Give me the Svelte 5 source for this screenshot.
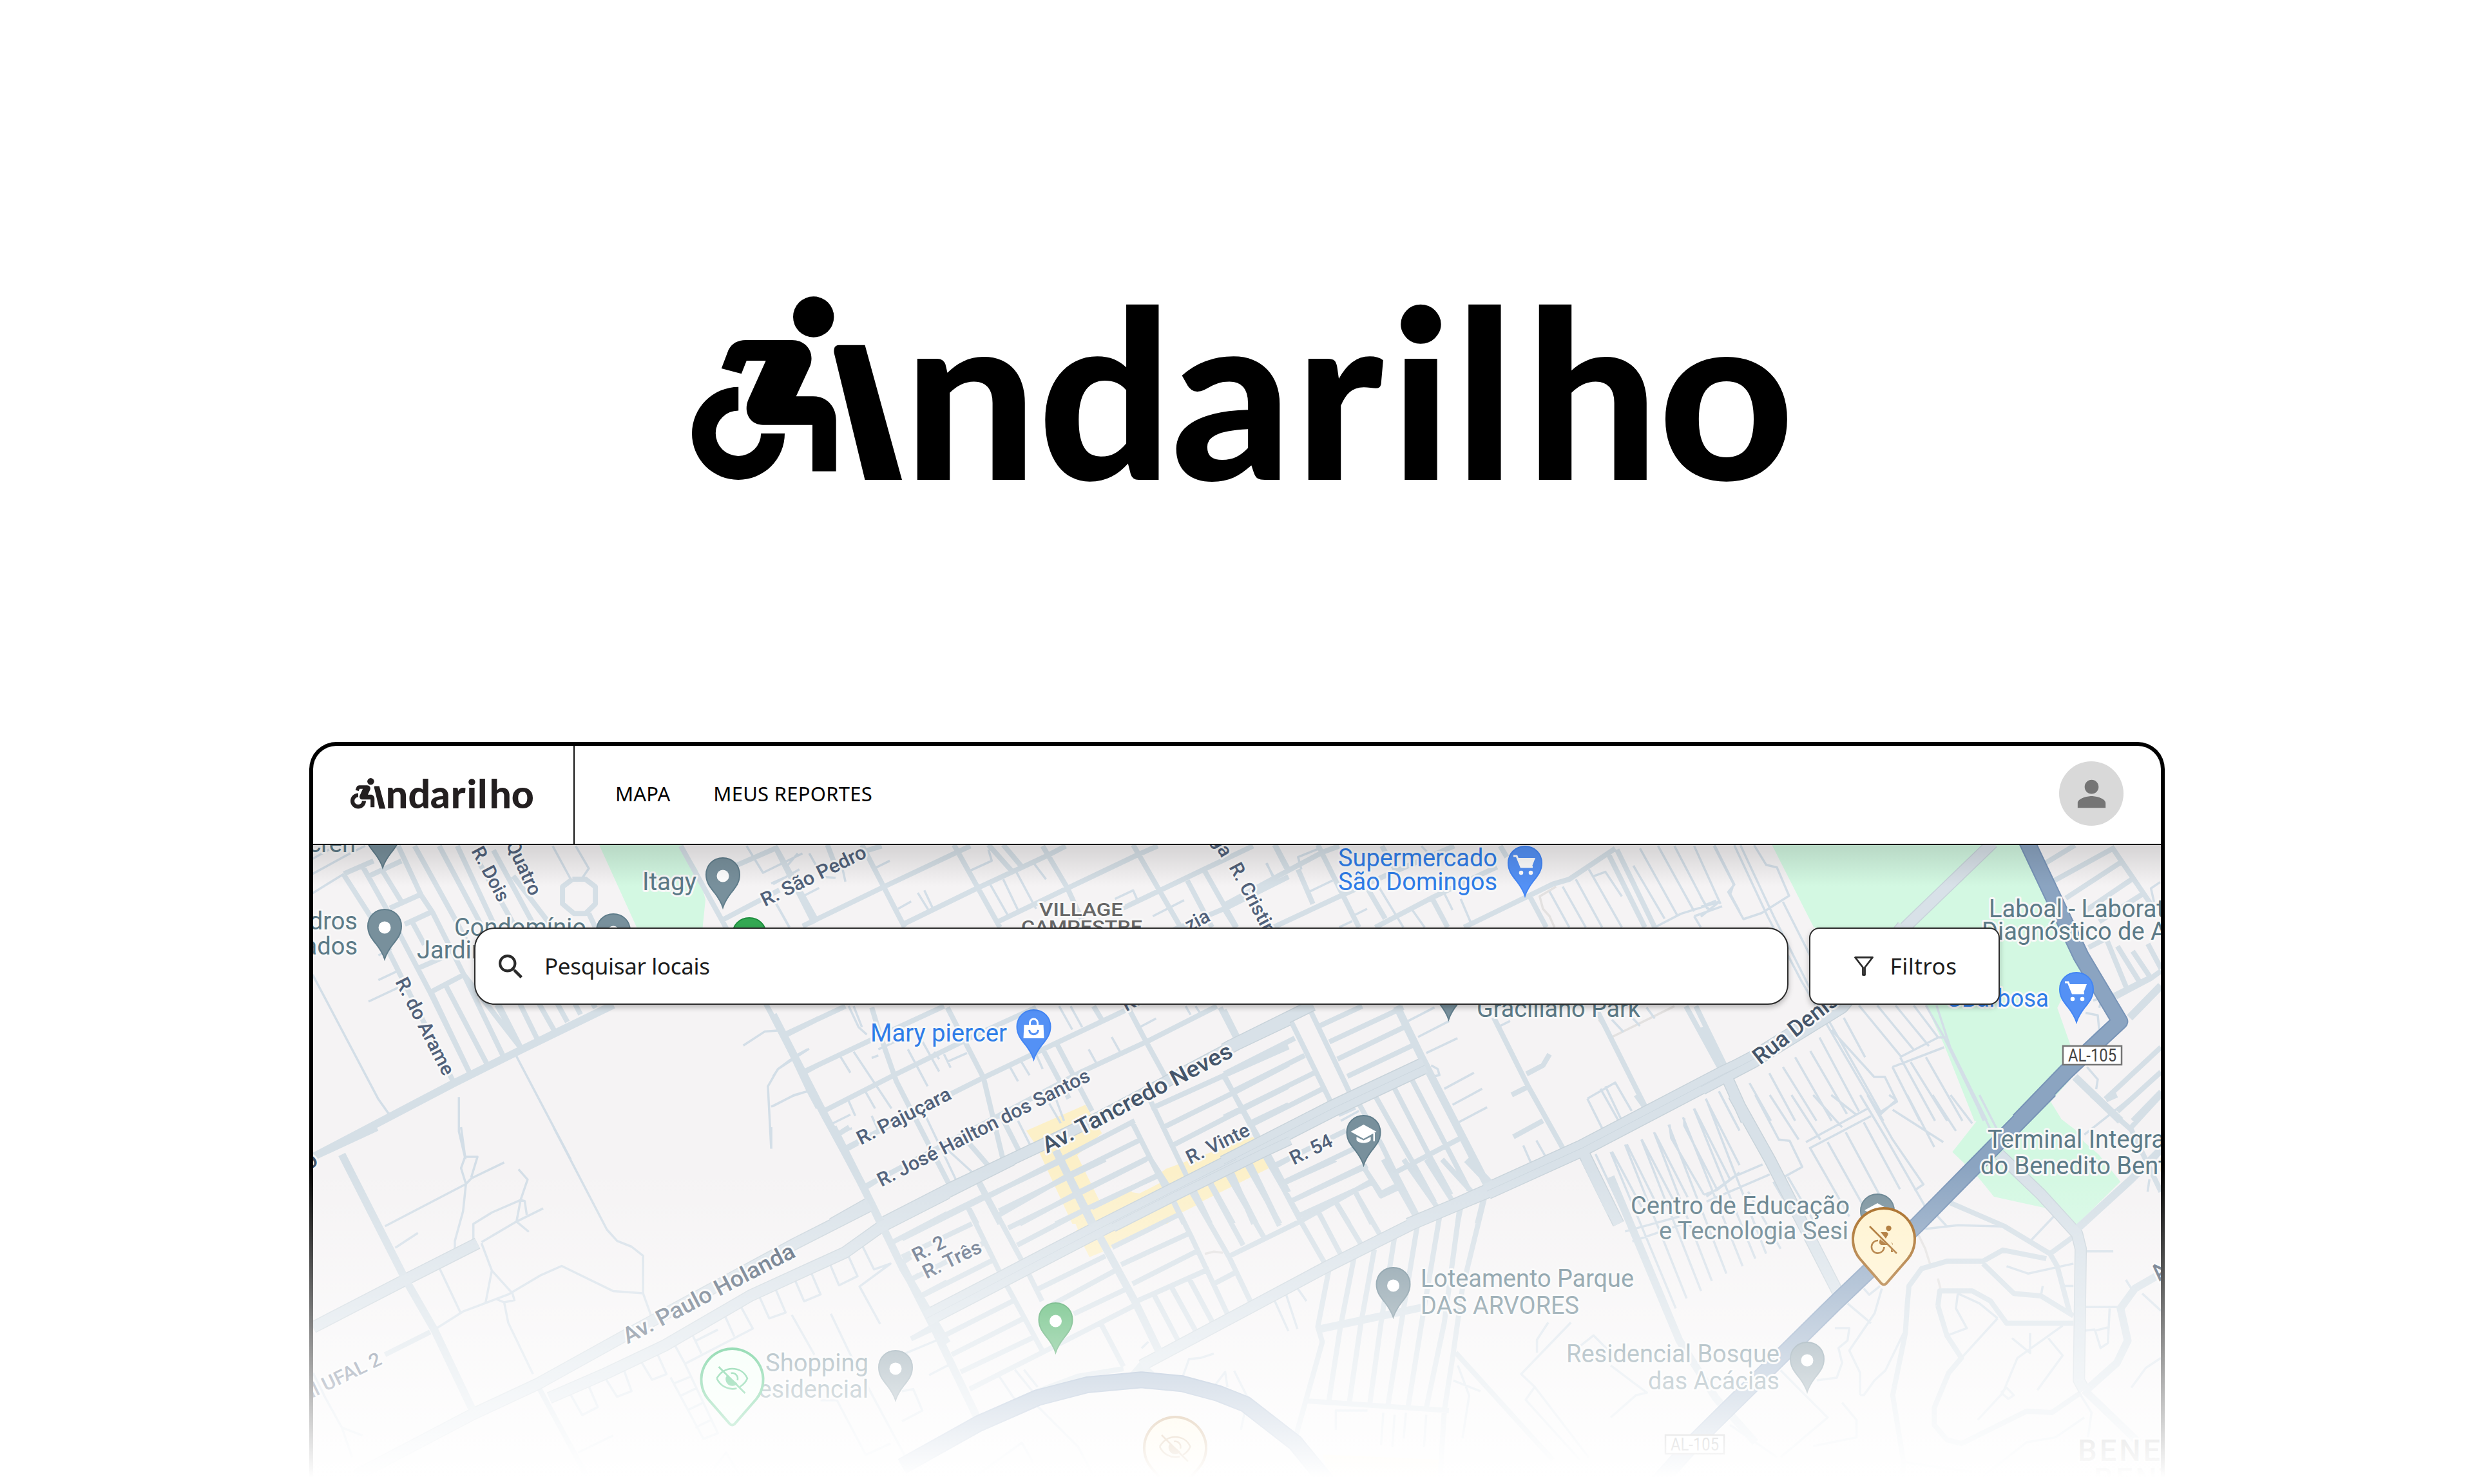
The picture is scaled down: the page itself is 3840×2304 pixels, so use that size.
<script>
  const sheet = (ox, oy, sx, sy) => (text) =>
    text
      .trim()
      .split(/\s*;\s*|\n+/)
      .filter((line) => line.trim())
      .map(
        (line) =>
          'M' +
          line
            .trim()
            .split(/\s+/)
            .map((p) => {
              const [x, y] = p.split(',').map(Number);
              return (ox + x * sx).toFixed(1) + ' ' + (oy + y * sy).toFixed(1);
            })
            .join('L')
      )
      .join('');

  const nw = sheet(470, 1300, 0.5102, 0.3333);
  const north = sheet(1200, 1300, 0.5102, 0.3827);
  const mid = sheet(1900, 1300, 0.5102, 0.3827);
  const ne = sheet(2640, 1140, 0.472, 0.3827);
  const se = sheet(2500, 1700, 0.5612, 0.3852);
  const sw = sheet(470, 1750, 0.6378, 0.3533);
  const south = sheet(1400, 1800, 0.7015, 0.3333);

  const parks =
    nw('900,30 1150,30 1200,150 1225,290 1215,440 1022,440') +
    ne('230,440 1050,440 1265,965 1220,990 1172,1110 1215,1260 1230,1380 1150,1490 1190,1570 900,1570 800,1260 740,1100 370,780') +
    se('1000,0 1185,0 1220,60 1240,90 1285,140 1310,190 1350,240 1410,350 1290,522 1200,455 1060,410 1010,320 945,230 1015,100');

  const shops =
    north('770,1190 950,1085 1000,1200 925,1290 995,1480 1090,1435 1100,1455 1180,1400 1170,1370 1195,1345 1460,1215 1475,1240 1215,1420 980,1568 910,1568 800,1250') +
    north('1100,1568 1220,1480 1500,1290 1512,1340 1240,1520 1200,1568') +
    south('385,330 420,310 445,430 415,455; 360,180 410,190 440,190 500,150 560,170 430,330 390,330; 440,350 600,190 660,150 650,215 460,415; 930,1375 1200,1400 1190,1500 950,1500');

  const lanes = [
    nw(`230,665 285,625; 200,765 290,700; 230,550 270,520; 30,640 230,1220 260,1285 285,1300; 650,1020 815,1500
      475,1210 475,1370 495,1500; 30,170 150,70 190,40; 30,260 125,170; 30,100 100,40; 760,40 815,195; 830,40 870,145 850,190
      1350,40 1400,165 1520,75; 1340,970 1405,905 1445,900; 1425,1450 1415,1160 1445,1080 1540,985; 1425,1255 1490,1205 1540,1180
      1425,215 1470,185; 1440,310 1480,420`),
    north(`600,135 665,95 655,50; 310,125 355,95; 380,290 420,260; 440,225 475,300; 460,215 490,300; 660,190 720,330; 700,170 750,310
      740,140 800,290; 790,100 830,170; 0,190 80,130; 40,120 75,65; 110,65 150,160 190,165; 210,120 220,180; 90,240 140,205
      10,270 50,365; 1040,250 1095,215 1110,260; 1155,320 1250,255; 1500,105 1525,165; 230,685 260,770 285,800; 245,685 270,770
      870,685 910,780; 905,685 940,770; 1115,770 1165,735; 70,885 105,860; 0,970 15,940 55,900; 0,1090 65,1045 105,1030
      175,1165 235,1125; 195,1205 240,1180; 205,890 235,955; 245,870 360,1100; 280,1030 310,1100; 410,860 470,1010; 455,830 505,950
      490,870 505,900; 530,910 590,875; 540,935 520,880; 720,930 745,990; 755,910 780,965; 800,880 820,940; 1030,810 1055,870
      960,860 985,920; 300,1130 320,1190; 230,1070 250,1130; 460,1120 560,1400; 500,1230 615,1370; 745,1150 790,1270
      320,860 370,830; 300,895 320,885; 840,1080 875,1160; 860,1060 885,1150; 1255,685 1270,720; 1285,685 1300,715`),
    mid(`470,200 545,365; 720,250 750,345; 570,290 610,365; 260,220 330,175; 235,130 225,80 290,45; 990,220 1050,365; 1030,200 1100,365
      1070,170 1150,365; 1110,130 1210,365; 1245,115 1340,330; 1265,45 1380,320; 1320,35 1430,300; 1370,35 1470,290; 1430,35 1510,270
      1490,35 1550,190 1540,230 1568,300; 1310,365 1390,310 1510,260; 1430,320 1515,280; 1430,320 1450,365; 1120,160 1160,140 1210,240
      130,105 150,165; 390,320 435,290; 350,365 390,340; 660,200 695,295; 600,35 640,90; 560,745 640,690; 590,810 685,745
      615,875 710,815; 670,1020 760,955; 695,1085 785,1020; 715,1155 800,1095; 630,925 650,940 655,965 635,970; 840,765 870,745
      910,1250 935,1325; 950,1230 980,1300; 1105,1060 1190,995 1240,1110; 1105,1060 1150,1180; 1145,1020 1200,1150; 1160,1010 1210,1150
      1130,1285 1230,1568; 1180,1275 1270,1500; 1225,1245 1320,1500; 1270,1225 1370,1480; 1310,1200 1410,1460; 1355,1165 1360,1220 1460,1450
      1400,1140 1400,1170 1500,1430; 1430,1100 1540,1390; 1465,1060 1568,1330; 1505,1030 1568,1190; 1460,1450 1500,1430 1568,1360
      1180,740 1215,790; 1230,715 1265,765; 1285,690 1310,735; 350,1130 400,1100; 355,1150 410,1110`),
    ne(`45,450 110,610 90,640 140,750 200,725 290,655 250,540 215,530 175,450; 110,450 220,740 330,1000 520,1400 600,1568
      130,450 240,740 350,1010 540,1420 590,1530; 0,740 60,680; 0,660 30,720; 0,700 50,675; 270,680 360,900; 1510,600 1480,625 1490,680
      225,1375 310,1568; 270,1350 380,1568; 310,1310 430,1568; 360,1285 480,1540; 390,1230 520,1530
      430,1200 570,1390 605,1390 645,1490 580,1540; 470,1150 540,1310; 520,1100 660,1310; 580,1100 700,1280; 640,1100 750,1265
      700,1100 780,1230; 160,1415 230,1568; 60,1450 110,1568; 655,1310 780,1230 805,1230; 630,1350 800,1270; 655,1310 770,1568
      690,1330 810,1568; 740,1310 860,1568; 630,1350 720,1568; 740,1100 800,1230 910,1510 930,1568; 775,1100 820,1270 940,1568
      1265,1130 1305,1140 1310,1200 1270,1250; 1270,1350 1305,1400 1300,1440; 1290,1080 1320,1070 1310,1110`),
    se(`0,230 180,860; 40,200 210,820; 85,180 250,790; 120,150 280,750; 160,120 320,720; 200,90 365,690; 230,55 400,660; 265,20 430,640
      40,550 190,490; 60,590 200,520; 265,410 340,330 420,280; 265,430 440,320; 400,0 465,180 495,185 530,290 480,330
      440,0 520,180; 540,190 710,55; 550,215 720,85; 500,0 580,180; 560,0 640,130; 610,0 680,80; 550,210 660,490; 600,190 700,450
      650,150 750,420; 700,110 800,380; 745,80 790,20 770,0; 780,60 920,190; 690,0 760,170 870,450; 710,0 780,180 865,360 840,385
      820,0 895,210; 890,0 955,145; 940,0 1000,115; 1005,0 1070,200; 1020,0 1090,200; 380,390 470,620; 450,350 550,600; 490,330 590,580
      870,540 960,525 1090,530; 880,450 930,530; 1160,590 1225,490; 1310,630 1390,630; 1095,690 1155,720 1280,680; 1250,770 1280,770
      1310,855 1410,855; 960,800 955,860 985,940 930,970; 960,800 1020,840 1070,900; 1070,900 970,1060
      1250,930 1125,1060 1085,1200 1015,1310; 1210,980 1250,1050 1180,1190; 1110,980 1160,1040 1160,960
      1380,860 1375,1000 1355,1020 1340,950 1380,935; 750,780 730,880 660,1030 690,1120 690,1210; 655,840 720,920
      620,940 660,940 655,990 630,1020 640,1080 625,1140 570,1150; 470,1110 600,1300 470,1460; 330,1330 460,1460
      0,1090 100,1200 70,1210 0,1300; 810,960 760,1110 730,1150 700,1210 690,1210; 1195,770 1190,810; 1310,950 1340,945
      1080,1200 1100,1225 1115,1210 1095,1180 1080,1200; 640,1240 680,1310 680,1380 560,1415; 1440,1180 1480,1100 1522,1060
      1320,1380 1330,1280 1300,1210; 810,1480 1000,1520; 1010,1560 1150,1400 1230,1380 1310,1300; 700,780 715,805 745,770
      1310,160 1440,10; 1485,390 1490,340; 1470,800 1522,870; 1425,745 1440,780`),
    sw(`320,890 390,810 500,735 580,650 630,610 755,720 830,730; 385,0 395,130 425,130 410,220
      395,130 385,180 397,250 390,370 370,500 370,540; 200,435 397,250 410,225 490,155; 525,185 547,230 530,320 520,415 550,460
      415,500 415,425 460,375 530,320 540,325 545,385; 435,505 520,415 585,357; 225,530 280,465; 435,510 460,630 510,730
      460,630 445,770; 330,610 385,820; 510,730 515,760 490,770 470,755; 490,770 500,860 560,1085
      610,0 740,450 765,500 800,525 828,565 828,730 850,840; 1195,660 1220,765 1260,735 1235,630; 1110,740 1135,840 1175,815 1150,710
      1280,590 1305,695 1350,655 1325,555; 1360,515 1390,625 1430,600 1355,700 1405,865; 1025,820 1050,920
      1065,785 1095,885 930,1040; 900,940 930,1040; 945,900 970,995; 955,940 1010,890; 820,1020 850,1110 885,1085 860,985
      735,1100 765,1185 800,1160 780,1060; 650,1170 680,1265 718,1230 695,1135; 895,1100 975,1370 1010,1345 930,1040
      905,1125 945,1095; 920,1180 960,1145; 935,1245 975,1210; 955,1320 995,1285; 1190,825 1245,1000; 1285,820 1330,990 1470,1460
      1140,0 1140,95; 25,1080 55,1190 95,1320 120,1450; 95,1320 145,1355; 1260,1200 1300,1200 1370,1440 1430,1390
      670,1430 755,1355; 1000,1500 1030,1430 1070,1550`),
    south(`825,660 855,800; 850,630 875,790; 875,600 895,660; 620,1020 635,930 660,925 690,905; 1230,960 1255,1100 1240,1300
      1430,760 1405,840 1405,900; 1480,760 1370,1000 1400,1060 1520,1390; 1400,1060 1380,1120 1500,1400; 690,1060 715,990 720,1060
      735,985 765,1110 750,1260; 20,830 60,780; 0,910 80,840; 60,1005 110,950; 215,1010 250,1120; 250,980 300,1110; 270,980 300,1060
      300,1150 390,1340 430,1500; 0,1080 25,1070 45,1170 0,1220; 960,1260 960,1170 1030,1170; 1065,1180 1060,1330; 1090,1190 1085,1340
      1115,1180 1110,1300; 1160,1190 1155,1340; 1220,1030 1280,1080; 530,880 545,850; 160,1480 265,1320 290,1410; 1500,870 1530,820 1568,900`)
  ].join('');

  const streets = [
    nw(`125,175 215,390 290,620 460,1145; 125,170 215,110; 180,130 250,320 385,715 510,1105; 240,150 300,300; 390,720 510,1105
      290,40 360,270 395,350 490,640 665,985; 435,690 565,1070; 340,40 470,400 665,985; 415,40 540,400 715,945; 470,40 580,400 765,900
      530,100 640,400 805,860; 580,60 700,400 845,825; 640,180 740,380 890,795; 395,350 490,640 610,1020; 195,185 300,110; 265,330 360,265
      310,405 395,345; 350,610 440,550; 390,720 490,640; 820,195 790,230 790,310 825,355 860,355 890,310 890,230 860,195 820,195
      870,355 890,420; 1150,40 1280,400 1410,780 1460,920 1540,1180 1568,1260; 1270,390 1450,245; 1320,130 1440,50 1560,380; 1465,925 1568,845
      1520,1100 1568,1060; 335,400 370,500; 590,780 665,985`),
    north(`5,35 125,350; 270,30 400,365; 550,30 690,365; 820,35 895,205 950,365; 1095,30 1240,365; 1310,130 1410,365; 1260,175 1335,365
      1525,30 1568,140; 655,30 725,135; 700,30 760,125; 165,30 185,100; 90,360 330,205 560,60 600,35; 400,350 615,210 840,70 890,35
      680,345 890,210 1110,70 1170,35; 1060,290 1170,220 1310,130 1460,35; 1210,380 1380,285 1568,160; 270,60 330,35
      35,800 220,685; 95,950 325,805 520,685; 155,1110 360,970 620,800 800,690; 215,1265 490,1075 640,975 860,835 1090,690
      275,1420 600,1190 940,950 1135,830 1350,685; 300,690 325,800 375,990 540,1420; 530,690 640,975 700,1310; 690,1120 755,1290; 860,830 970,1110
      820,860 900,1060; 975,685 1000,740; 1080,690 1135,830 1205,1000; 1360,690 1410,820; 1090,1150 1195,1430; 1145,1060 1260,1380
      1370,960 1480,1240; 595,1240 660,1340; 1150,1100 1390,955 1568,850; 1190,1175 1410,1030 1568,920; 1215,1250 1440,1095 1568,1010
      1450,1160 1568,1085; 650,1460 870,1310 1100,1150; 690,1530 900,1370 1120,1225; 750,1568 930,1440 1150,1295; 860,1568 965,1500 1175,1370
      470,1568 650,1450; 620,1390 690,1568; 590,1490 620,1568; 1215,1470 1250,1568; 1280,1430 1330,1568; 1330,1400 1400,1568
      1390,1360 1470,1568; 1450,1320 1540,1568; 1500,1270 1568,1440; 1520,1340 1568,1305`),
    mid(`0,275 230,110 300,60 350,35; 150,365 350,240 500,150 700,35; 460,365 640,240 830,120; 730,365 1000,190 1050,170 1190,45
      155,30 195,130; 285,30 410,365; 225,130 270,270; 420,170 490,330; 630,240 680,365; 930,240 980,365; 0,290 35,365
      1170,70 1280,365; 1195,50 1310,365; 840,35 860,80; 480,35 520,130; 0,700 45,820; 205,750 325,1075; 265,710 380,1030
      0,970 110,1230; 0,960 215,815; 20,1035 245,885; 0,1135 275,955; 85,1165 300,1020; 290,765 420,685; 320,830 545,690
      345,900 555,765; 375,970 580,840; 410,1080 480,1250 520,1360; 460,1050 570,1310 640,1480; 515,1010 620,1280 690,1450
      570,980 745,1430; 155,1330 370,1190; 180,1400 400,1260; 205,1475 430,1330; 220,1540 450,1400; 520,1360 720,1220; 470,1450 530,1410
      110,1260 230,1540; 425,1340 480,1450; 520,1360 590,1540; 20,1350 90,1568; 70,1330 170,1568; 340,1480 380,1568; 400,1440 450,1568
      820,730 925,1010 1030,1260; 920,960 970,925 990,880; 875,1045 920,1015; 880,1215 970,1150; 1130,690 1280,1090; 1405,685 1510,940
      1435,685 1525,930; 720,1500 710,1568; 790,1460 770,1568`),
    ne(`1130,525 1230,450; 1160,595 1360,460; 1200,665 1380,520; 1260,720 1415,590; 1310,760 1450,650; 1350,455 1480,690
      1275,865 1330,830; 1330,820 1400,1030; 1370,860 1440,1000; 1365,1065 1480,990 1513,960; 1420,880 1480,990; 1470,850 1513,950
      1310,1090 1480,985; 0,1190 70,1370; 1330,1480 1513,1270; 1370,1530 1513,1370; 1420,1568 1513,1450`),
    se(`70,0 95,50; 1440,130 1522,0; 1370,20 1400,0; 1330,0 1440,140 1522,390; 1215,640 1290,560; 1215,640 1235,690 1270,880
      1205,660 1085,625 1030,670 930,670 860,700 825,770 820,850 815,960 780,1210 810,1480 805,1568; 1030,680 1115,800 1190,810 1280,890
      905,850 910,790 1000,790 1050,830 1095,920 1280,920; 905,850 930,970 970,1060 935,1120 895,1260 895,1330 930,1390 970,1405 1150,1275 1220,1280 1300,1200
      940,435 1090,530 1215,640`),
    sw(`200,1000 310,900; 1320,100 1350,70; 1370,265 1400,230; 1430,510 1568,380; 1455,600 1480,570; 1475,675 1500,650; 1500,745 1568,680
      1520,850 1568,780; 570,1130 690,1530; 1480,930 1540,880; 1295,40 1330,0`),
    south(`0,370 190,170 360,0; 215,240 370,80 450,0; 235,320 390,160 540,0; 255,400 400,240; 420,225 570,70; 0,455 155,300; 20,560 180,390
      40,640 205,465; 85,830 245,660; 110,910 270,740; 130,990 290,830; 150,1070 310,900; 300,605 450,450; 330,680 470,520
      380,720 500,600; 310,900 515,680; 465,410 610,260; 485,490 640,340; 510,580 655,425; 520,660 680,510; 170,100 270,490 310,660
      145,220 215,520; 230,580 310,890; 600,190 640,360 720,720; 640,150 725,460 775,680; 680,110 755,400; 720,70 800,360
      770,30 835,310; 810,0 880,280 940,500; 550,0 590,130; 725,450 880,290 1040,100; 845,110 960,0; 865,190 1030,30
      1020,30 1040,100 1060,170 1100,130; 690,580 735,530; 555,620 610,840; 595,590 650,800; 635,555 690,770; 440,765 490,965
      920,240 975,460; 960,200 1020,410; 1005,160 1060,360; 1065,0 1140,280; 1110,0 1190,240; 1160,0 1220,200; 1195,0 1260,150
      945,510 920,780 930,850 870,1300; 1000,460 970,780 945,1120; 1045,420 1015,770 990,1130; 1090,360 1060,760 1035,1140
      1140,310 1105,760 1075,1150; 1190,260 1150,760 1120,1150; 1235,210 1200,760 1160,1160; 1290,170 1240,600 1220,900 1200,1170 1190,1500
      895,1125 1210,1170; 490,975 390,1010 300,1080 175,1230; 1225,900 1440,1400`)
  ].join('');

  const collectors = [
    nw('30,1490 460,1145 670,985 945,780'),
    north('0,720 150,1110 215,1270 275,1420 325,1560; 860,1270 970,1568'),
    mid('525,685 600,890 650,1020 800,1410'),
    ne('1410,1150 1513,1020; 1230,1390 1380,1568'),
    se('0,330 190,990 290,1220 400,1400; 1290,540 1440,340 1522,220; 1315,1190 1400,1080 1430,990 1410,860 1450,780 1522,720; 1310,1190 1460,1400'),
    sw('95,120 250,670 320,890 415,1250; 25,130 180,0; 1290,0 1385,340 1460,620 1568,950'),
    south('350,0 430,330 515,660 570,900; 0,490 65,760 175,1240; 925,790 1150,690; 1250,0 1300,110; 510,1010 530,960 555,1010; 1510,0 1568,250')
  ].join('');

  const avenues = [
    north('340,1560 545,1420 815,1250 1000,1130 1410,840 1568,740; 180,1568 290,1485'),
    mid('0,860 20,845 270,680; 560,1568 700,1490 800,1430; 1090,1270 1200,1568'),
    ne('85,1390 150,1568; 960,440 670,785'),
    se('340,0 440,260 630,800; 1075,240 1190,400 1290,560 1300,620 1295,1150 1310,1190'),
    sw('25,880 250,670 425,510; 1380,345 1200,510 780,920 570,1130 415,1260 130,1530; 1568,290 1405,440 1320,550 1090,740 880,960 740,1080 600,1190'),
    south('0,260 245,0; 1300,150 1130,300 940,500 780,680 530,960')
  ].join('');

  const arterials = [
    north('1030,1568 1220,1440 1480,1270 1568,1215'),
    mid('0,1325 330,1100 610,925; 800,1435 1090,1260 1520,960 1568,930'),
    ne('0,1430 170,1320 460,1100 670,785'),
    south('740,0 430,330 55,740')
  ].join('');

  const highway =
    ne('1070,430 1250,900 1378,1165 1200,1370 1045,1568') +
    se('1215,-20 850,520 620,840 230,1400 120,1580') +
    south('0,1430 170,1230 300,1110 410,1050 530,1027 620,1045 700,1090 760,1140 870,1320 940,1500');

  const tracks = mid('1010,200 960,240 970,290 990,320 1005,365; 1140,740 1180,810 1370,685') + se('850,560 870,620 885,690; 905,740 912,780') + south('670,440 690,430 710,435');

  const labels = [
    { t: 'cren', x: 552, y: 1323, k: 'poi', end: true },
    { t: 'dros', x: 555, y: 1443, k: 'poi', end: true },
    { t: 'ados', x: 555, y: 1482, k: 'poi', end: true },
    { t: 'Condomínio', x: 705, y: 1453, w: 205, k: 'poi' },
    { t: 'Jardim', x: 647, y: 1488, k: 'poi' },
    { t: 'Itagy', x: 997, y: 1382, w: 84, k: 'poi' },
    { t: 'Supermercado', x: 2077, y: 1345, w: 247, k: 'shop' },
    { t: 'São Domingos', x: 2077, y: 1382, w: 247, k: 'shop' },
    { t: 'Mary piercer', x: 1351, y: 1617, w: 212, k: 'shop' },
    { t: 'GBarbosa', x: 3020, y: 1563, w: 160, k: 'shop' },
    { t: 'VILLAGE', x: 1613, y: 1422, w: 130, k: 'area' },
    { t: 'CAMPESTRE', x: 1585, y: 1449, w: 188, k: 'area' },
    { t: 'Graciliano Park', x: 2292, y: 1579, w: 254, k: 'poi' },
    { t: 'Laboal - Laboratório', x: 3087, y: 1424, k: 'poi' },
    { t: 'Diagnóstico de Análises', x: 3076, y: 1459, k: 'poi' },
    { t: 'Terminal Integrado', x: 3085, y: 1782, k: 'poi' },
    { t: 'do Benedito Bentes', x: 3074, y: 1823, k: 'poi' },
    { t: 'Centro de Educação', x: 2531, y: 1885, w: 340, k: 'poi' },
    { t: 'e Tecnologia Sesi', x: 2575, y: 1924, w: 294, k: 'poi' },
    { t: 'Residencial Bosque', x: 2431, y: 2115, w: 331, k: 'poi' },
    { t: 'das Acácias', x: 2558, y: 2157, w: 204, k: 'poi' },
    { t: 'Loteamento Parque', x: 2205, y: 1998, w: 331, k: 'poi' },
    { t: 'DAS ARVORES', x: 2205, y: 2040, w: 246, k: 'poi' },
    { t: 'Shopping', x: 1188, y: 2129, w: 160, k: 'poi' },
    { t: 'Residencial', x: 1154, y: 2170, w: 194, k: 'poi' },
    { t: 'R. Dois', x: 731, y: 1321, w: 92, r: 62, k: 'street' },
    { t: 'Quatro', x: 785, y: 1311, w: 90, r: 65, k: 'street' },
    { t: 'R. do Arame', x: 613, y: 1524, w: 166, r: 63, k: 'street' },
    { t: 'R. São Pedro', x: 1187, y: 1408, w: 178, r: -26, k: 'street' },
    { t: 'ga', x: 1880, y: 1304, r: 60, k: 'street' },
    { t: 'R. Cristina', x: 1907, y: 1346, w: 138, r: 62, k: 'street' },
    { t: 'zia', x: 1846, y: 1447, r: -28, k: 'street' },
    { t: 'R.', x: 1748, y: 1571, r: -28, k: 'street' },
    { t: 'R. Pajuçara', x: 1336, y: 1778, w: 160, r: -27, k: 'street' },
    { t: 'R. José Hailton dos Santos', x: 1368, y: 1843, w: 366, r: -27, k: 'street' },
    { t: 'Av. Tancredo Neves', x: 1625, y: 1791, w: 328, r: -27.5, k: 'avenue' },
    { t: 'R. Vinte', x: 1847, y: 1808, w: 106, r: -26, k: 'street' },
    { t: 'R. 54', x: 2008, y: 1809, w: 70, r: -26, k: 'street' },
    { t: 'R. 2', x: 1422, y: 1960, w: 54, r: -27, k: 'street' },
    { t: 'R. Três', x: 1438, y: 1986, w: 98, r: -26, k: 'street' },
    { t: 'Av. Paulo Holanda', x: 974, y: 2087, w: 296, r: -27.5, k: 'avenue' },
    { t: 'al UFAL 2', x: 476, y: 2175, w: 132, r: -26, k: 'street' },
    { t: 'o', x: 478, y: 1817, r: -28, k: 'avenue' },
    { t: 'Rua Denisson', x: 2732, y: 1654, r: -38, k: 'avenue' },
    { t: 'A', x: 3352, y: 1990, r: -45, k: 'avenue' },
    { t: 'BENEDITO', x: 3225, y: 2268, k: 'district' },
    { t: 'BENTES', x: 3250, y: 2312, k: 'district' }
  ];

  const pins = [
    { x: 594, y: 1269, c: 'place' },
    { x: 597, y: 1411, c: 'place', dot: true },
    { x: 952, y: 1418, c: 'place', dot: true },
    { x: 1122, y: 1331, c: 'place', dot: true },
    { x: 1163, y: 1424, c: 'green' },
    { x: 2367, y: 1313, c: 'blue', icon: 'cart' },
    { x: 1604.5, y: 1567, c: 'blue', icon: 'bag' },
    { x: 3223, y: 1509, c: 'blue', icon: 'cart' },
    { x: 2248.5, y: 1505, c: 'place' },
    { x: 2116.5, y: 1731, c: 'place', icon: 'school' },
    { x: 2914, y: 1853, c: 'place', icon: 'school' },
    { x: 2805, y: 2083, c: 'place', dot: true },
    { x: 2162.5, y: 1967, c: 'place', dot: true },
    { x: 1638.5, y: 2022, c: 'green', dot: true },
    { x: 1390, y: 2096, c: 'place', dot: true }
  ];

  const shields = [
    { x: 3201, y: 1623 },
    { x: 2584, y: 2227 }
  ];

  const reports = [
    { x: 2924, y: 1874, tone: 'warn', icon: 'wheelchair' },
    { x: 1136.5, y: 2092, tone: 'ok', icon: 'eye' },
    { x: 1824, y: 2198, tone: 'warn', icon: 'eye' }
  ];
</script>

{#snippet logo(size)}
  <svg class="logo {size}" viewBox="1074 460 1694 290" role="img" aria-label="Andarilho">
    <circle cx="1262.7" cy="492" r="31.7" />
    <path d="M1157.7 528H1229C1251 528 1265 546 1257.5 568L1235.7 615.3H1262C1283 615.3 1297.7 631 1297.7 652V731.7H1261V659.7H1184C1164 659.7 1153 640 1161.7 620L1188.7 560H1158.8L1150.8 580.3L1119.8 572L1130.7 543.3C1136 533 1145 528 1157.7 528Z" />
    <path d="M1146.2 600.8A72 72 0 1 0 1218 673H1181.2A35.2 35.2 0 1 1 1146.2 637.5Z" />
    <path d="M1302 535.7H1342.5L1400 745H1342.5L1294.6 548C1293.5 541 1296 535.7 1302 535.7Z" />
    <text class="wordmark" y="745" x="1403 1611 1818 2010 2158 2258 2368 2574">ndarilho</text>
  </svg>
{/snippet}

<main class="page">
  <section class="hero">{@render logo('large')}</section>

  <section class="window">
    <header class="topbar">
      <div class="brand">{@render logo('small')}</div>
      <nav class="nav">
        <span class="link mapa">MAPA</span>
        <span class="link reportes">MEUS REPORTES</span>
      </nav>
      <div class="avatar">
        <svg viewBox="0 0 24 24"><path d="M12 12c2.21 0 4-1.79 4-4s-1.79-4-4-4-4 1.79-4 4 1.79 4 4 4zm0 1.3c-2.67 0-8 1.34-8 4V20h16v-2.7c0-2.66-5.33-4-8-4z" /></svg>
      </div>
    </header>

    <div class="map">
      <svg class="canvas" viewBox="486 1312 2868 992">
        <rect class="land" x="486" y="1312" width="2868" height="992" />
        <path class="park" d={parks} />
        <path class="commerce" d={shops} />
        <path class="track" d={tracks} />
        <path class="lane" d={lanes} />
        <path class="street-line" d={streets} />
        <path class="avenue-edge" d={avenues} />
        <path class="arterial-edge" d={arterials} />
        <path class="collector" d={collectors} />
        <path class="avenue-line" d={avenues} />
        <path class="arterial-line" d={arterials} />
        <path class="median" d={arterials} />
        <path class="highway-edge" d={highway} />
        <path class="highway-line" d={highway} />

        {#each labels as l}
          <text
            class="label {l.k}"
            class:end={l.end}
            x={l.x}
            y={l.y}
            textLength={l.w}
            lengthAdjust="spacingAndGlyphs"
            transform={l.r ? `rotate(${l.r} ${l.x} ${l.y})` : undefined}>{l.t}</text>
        {/each}

        {#each shields as s}
          <g class="shield">
            <rect x={s.x + 1} y={s.y + 1} width="91" height="29" />
            <text x={s.x + 9} y={s.y + 24.5} textLength="75" lengthAdjust="spacingAndGlyphs">AL-105</text>
          </g>
        {/each}

        {#each pins as p}
          <g class="pin {p.c}" transform="translate({p.x} {p.y})">
            <path class="drop" d="M0 1C15 1 26 12 26 27C26 39 20 46 13 55C6 64 3 69 0 78C-3 69 -6 64 -13 55C-20 46 -26 39 -26 27C-26 12 -15 1 0 1Z" />
            {#if p.dot}
              <circle class="white" cx="0" cy="29" r="9.5" />
            {:else if p.icon === 'cart'}
              <path class="stroke" d="M-18 16H-13L-6 33H12" />
              <path class="white" d="M-12 19H16L11 32H-7Z" />
              <circle class="white" cx="-6" cy="42" r="3.3" />
              <circle class="white" cx="9" cy="42" r="3.3" />
            {:else if p.icon === 'bag'}
              <path class="white" d="M-15 24H15L16 45H-16Z" />
              <path class="stroke" d="M-6 26V21A6 6 0 0 1 6 21V26" />
              <path class="smile" d="M-7 32C-6 41 6 41 7 32" />
            {:else if p.icon === 'school'}
              <path class="white" d="M0 15L20 26L0 37L-20 26ZM-11 34L0 39.500L11 34V39C8 45 -8 45 -11 39ZM15 28H17.500V41H15Z" />
            {/if}
          </g>
        {/each}

        {#each reports as m}
          <g class="report {m.tone}" transform="translate({m.x} {m.y})">
            <path class="drop" d="M0 2A48 48 0 0 1 37.500 80L3.500 119Q0 122 -3.500 119L-37.500 80A48 48 0 0 1 0 2Z" />
            {#if m.icon === 'wheelchair'}
              <circle class="solid" cx="7.5" cy="33" r="4.2" />
              <path class="solid" d="M-5 39H4Q8 40 6 44L3 49ZM-6 50L6 59H-4Q-9 57 -6 50ZM11 54L14 57V59ZM11 65L14 68V70H11Z" />
              <path class="thin" d="M-9 52A9.800 9.800 0 1 0 0.500 62" />
              <path class="thin" d="M-22 30L20 72" />
            {:else}
              <path class="thin" d="M-24 48C-18 38 -10 33 0 33C10 33 19 38 23.500 48C21 54 17 58 12 61M7 63.500C-7 67 -19 59 -24 48" />
              <path class="thin" d="M-2 40A8.500 8.500 0 0 1 8 51" />
              <path class="solid" d="M-8 43L8 56A9.500 9.500 0 0 1 -8 43Z" />
              <path class="thin" d="M-21 30L20 71" />
            {/if}
          </g>
        {/each}
      </svg>

      <div class="shade"></div>

      <div class="toolbar">
        <label class="search">
          <svg class="glass" viewBox="3 3 17.500 17.500"><path d="M15.500 14h-.79l-.28-.27A6.471 6.471 0 0 0 16 9.500 6.500 6.500 0 1 0 9.500 16c1.610 0 3.090-.59 4.230-1.570l.27.28v.79l5 4.990L20.490 19l-4.990-5zm-6 0C7.010 14 5 11.990 5 9.500S7.010 5 9.500 5 14 7.010 14 9.500 11.990 14 9.500 14z" /></svg>
          <span class="placeholder">Pesquisar locais</span>
        </label>
        <button class="filter">
          <svg class="funnel" viewBox="0 0 30 30"><path d="M1.500 1.500H28.500L16.500 17V28.500H13.500V17Z" /></svg>
          <span class="filter-text">Filtros</span>
        </button>
      </div>
    </div>
    <div class="fade"></div>
  </section>
</main>

<style>
  :global(body) {
    margin: 0;
    background: #fff;
  }
  .page {
    display: flex;
    flex-direction: column;
    align-items: center;
    width: 3840px;
    height: 2304px;
    overflow: hidden;
    background: #fff;
    font-family: 'Noto Sans', 'Open Sans', sans-serif;
  }
  .hero {
    display: flex;
    justify-content: center;
    box-sizing: border-box;
    height: 1152px;
    padding-top: 460px;
  }
  .logo {
    display: block;
    overflow: visible;
    fill: #000;
  }
  .large {
    width: 1694px;
    height: 290px;
    margin-left: 2px;
  }
  .small {
    width: 282px;
    height: 48.300px;
    fill: #231f20;
  }
  .wordmark {
    font: 900 365px Lato, 'Noto Sans', sans-serif;
  }
  .window {
    position: relative;
    box-sizing: border-box;
    flex: none;
    display: flex;
    flex-direction: column;
    width: 2880px;
    height: 1152px;
    border: 6px solid #000;
    border-bottom: 0;
    border-radius: 42px 42px 0 0;
  }
  .topbar {
    display: flex;
    align-items: center;
    flex: none;
    height: 152px;
    border-bottom: 2px solid #000;
  }
  .brand {
    display: flex;
    align-items: center;
    box-sizing: border-box;
    width: 406px;
    height: 100%;
    padding: 0 0 4px 58px;
    border-right: 2px solid #111;
  }
  .nav {
    display: flex;
    gap: 67px;
    flex: 1;
    padding: 0 0 4px 63px;
    color: #000;
    font-size: 31px;
    line-height: 42px;
    white-space: nowrap;
  }
  .mapa {
    letter-spacing: 0.100px;
  }
  .reportes {
    letter-spacing: 0.250px;
  }
  .avatar {
    display: flex;
    align-items: center;
    justify-content: center;
    width: 100px;
    height: 100px;
    margin-right: 58px;
    margin-bottom: 4px;
    border-radius: 50%;
    background: #d9d9d9;
  }
  .avatar svg {
    width: 65px;
    height: 65px;
    fill: #757575;
  }
  .map {
    position: relative;
    flex: 1;
    overflow: hidden;
  }
  .canvas {
    display: block;
    width: 2868px;
    height: 992px;
  }
  .land {
    fill: #f5f3f4;
  }
  .park {
    fill: #d3f8e2;
  }
  .commerce {
    fill: #fcf0c8;
  }
  .track,
  .lane,
  .street-line,
  .collector,
  .avenue-edge,
  .avenue-line,
  .arterial-edge,
  .arterial-line,
  .median,
  .highway-edge,
  .highway-line {
    fill: none;
    stroke: #d5dfe6;
    stroke-linejoin: round;
  }
  .track {
    stroke: #e3e1e0;
    stroke-width: 3.500;
  }
  .lane {
    stroke: #d3dee7;
    stroke-width: 3.500;
  }
  .street-line {
    stroke-width: 8;
  }
  .collector {
    stroke-width: 12;
  }
  .avenue-edge {
    stroke: #c8d3da;
    stroke-width: 19;
  }
  .avenue-line {
    stroke: #d8e1e8;
    stroke-width: 16;
  }
  .arterial-edge {
    stroke: #c8d3da;
    stroke-width: 27;
  }
  .arterial-line {
    stroke: #d8e1e8;
    stroke-width: 24;
  }
  .median {
    stroke: #ccd7df;
    stroke-width: 1;
  }
  .highway-edge {
    stroke: #7894b7;
    stroke-width: 26;
  }
  .highway-line {
    stroke: #8ba4c1;
    stroke-width: 22;
  }
  .label {
    font-family: Roboto, sans-serif;
    paint-order: stroke;
    stroke: #f8f8f8;
    stroke-width: 6;
    stroke-linejoin: round;
  }
  .end {
    text-anchor: end;
  }
  .poi {
    font-size: 38px;
    fill: #5c7a87;
  }
  .shop {
    font-size: 38px;
    fill: #2f7de8;
  }
  .area {
    font-size: 28px;
    font-weight: 500;
    fill: #666;
  }
  .street {
    font-size: 30px;
    font-weight: 500;
    fill: #51617a;
  }
  .avenue {
    font-size: 35px;
    font-weight: 500;
    fill: #44556a;
  }
  .district {
    font-size: 47px;
    font-weight: 500;
    letter-spacing: 4px;
    fill: #777;
  }
  .shield rect {
    fill: #fff;
    stroke: #757575;
    stroke-width: 2.500;
  }
  .shield text {
    font: 400 27px Roboto, sans-serif;
    fill: #444;
  }
  .place .drop {
    fill: #78909c;
    stroke: #607d8b;
  }
  .blue .drop {
    fill: #5491f5;
    stroke: #4285f4;
  }
  .green .drop {
    fill: #34a853;
    stroke: #1e8e3e;
  }
  .pin .drop {
    stroke-width: 2;
  }
  .white {
    fill: #fff;
  }
  .stroke {
    fill: none;
    stroke: #fff;
    stroke-width: 3;
  }
  .smile {
    fill: none;
    stroke: #5491f5;
    stroke-width: 3;
  }
  .report .drop {
    stroke-width: 4;
  }
  .warn {
    color: #a16014;
  }
  .ok {
    color: #0aad51;
  }
  .warn .drop {
    fill: #fff2cc;
    stroke: currentColor;
  }
  .ok .drop {
    fill: #f0fff4;
    stroke: currentColor;
  }
  .solid {
    fill: currentColor;
  }
  .thin {
    fill: none;
    stroke: currentColor;
    stroke-width: 2.600;
  }
  .shade {
    position: absolute;
    inset: 0 0 auto 0;
    height: 64px;
    background: linear-gradient(rgba(0, 0, 0, 0.13), rgba(0, 0, 0, 0));
  }
  .toolbar {
    position: absolute;
    top: 128px;
    left: 250px;
    display: flex;
    gap: 32px;
  }
  .search,
  .filter {
    display: flex;
    align-items: center;
    box-sizing: border-box;
    height: 120px;
    border: 2px solid #2a2a2a;
    background: #fff;
    box-shadow: 0 4px 8px rgba(0, 0, 0, 0.25);
    color: #1d1d1d;
    font-family: 'Noto Sans', 'Open Sans', sans-serif;
    font-size: 35px;
    line-height: 48px;
  }
  .search {
    gap: 34px;
    width: 2040px;
    padding-left: 36px;
    border-radius: 32px;
  }
  .filter {
    justify-content: center;
    gap: 25px;
    width: 296px;
    padding: 0 0 0 4px;
    border-radius: 16px;
  }
  .glass {
    width: 37px;
    height: 37px;
    fill: #2a2a2a;
  }
  .placeholder {
    letter-spacing: -0.350px;
  }
  .filter-text {
    letter-spacing: 0.500px;
  }
  .funnel {
    width: 30px;
    height: 30px;
  }
  .funnel path {
    fill: none;
    stroke: #2a2a2a;
    stroke-width: 2.800;
    stroke-linejoin: round;
  }
  .fade {
    position: absolute;
    inset: auto -6px 0 -6px;
    height: 494px;
    background: linear-gradient(rgba(255, 255, 255, 0), #fff 98%);
  }
</style>
